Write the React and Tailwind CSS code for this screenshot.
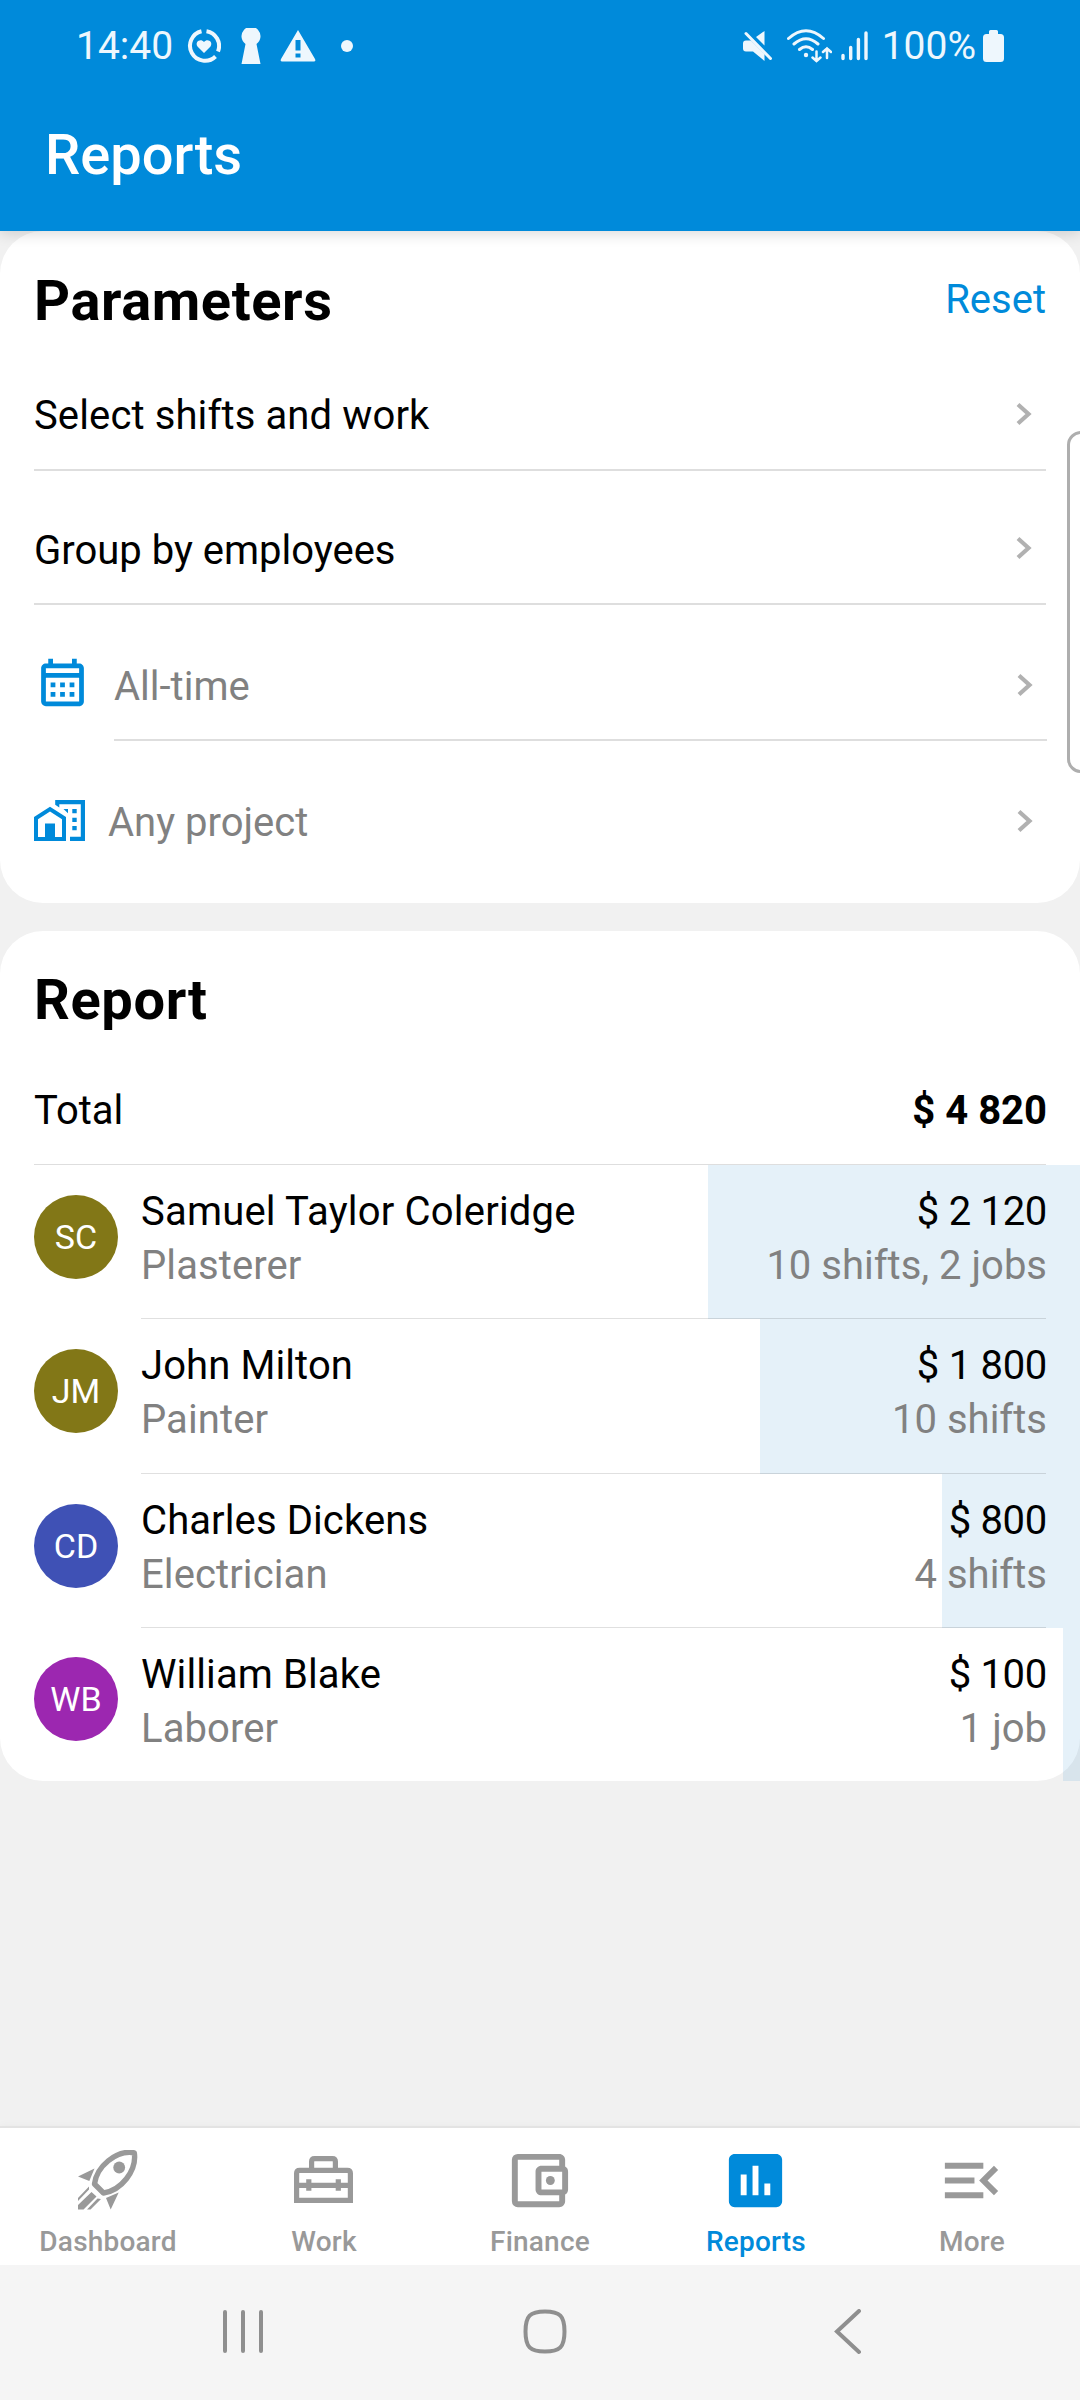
import { MdOutlineCalendarMonth, MdOutlineAccountBalanceWallet, MdInsertChart, MdMenuOpen } from 'react-icons/md';

const employees = [
  { initials: 'SC', name: 'Samuel Taylor Coleridge', role: 'Plasterer', amount: '$ 2 120', work: '10 shifts, 2 jobs', color: 'bg-[#827717]', bar: 372, height: 'h-[154px]' },
  { initials: 'JM', name: 'John Milton', role: 'Painter', amount: '$ 1 800', work: '10 shifts', color: 'bg-[#827717]', bar: 320, height: 'h-[155px]' },
  { initials: 'CD', name: 'Charles Dickens', role: 'Electrician', amount: '$ 800', work: '4 shifts', color: 'bg-[#3f51b5]', bar: 138, height: 'h-[154px]' },
  { initials: 'WB', name: 'William Blake', role: 'Laborer', amount: '$ 100', work: '1 job', color: 'bg-[#9c27b0]', bar: 17, height: 'h-[153px]' },
];

function RocketIcon() {
  return (
    <svg width="60" height="60" viewBox="0 0 60 60" fill="#999999">
      <path d="M56.300 2.800C38-.5 18.500 17 16.500 34L25.500 43C43 40.500 59 21 56.300 2.800Z" fill="none" stroke="#999999" strokeWidth="5.400" strokeLinejoin="round" />
      <circle cx="41.200" cy="17.500" r="5.900" />
      <path d="M0 26.500L16.500 18.500L11.300 31ZM28 48L40.700 42.500L32.700 59.500Z" />
      <path d="M13.500 42L18.500 46.500L5.500 59.500H0V55ZM11 36.500V39.500L0 51V48ZM19.500 48.500L23 49L12.500 59.500H9Z" />
    </svg>
  );
}

function ToolboxIcon() {
  return (
    <svg width="60" height="48" viewBox="0 0 60 48" fill="none" stroke="#999999" strokeWidth="5.200">
      <path d="M17.600 13V5.600Q17.600 2.600 20.600 2.600H38.400Q41.400 2.600 41.400 5.600V13" />
      <path d="M2.600 44.400V17.300Q2.600 14.300 5.600 14.300H53.400Q56.400 14.300 56.400 17.300V44.400ZM3 29.300H56M14.800 23.300V34.800M44.300 23.300V34.800" />
    </svg>
  );
}

function ProjectIcon() {
  return (
    <svg width="51" height="41" viewBox="0 0 51 41" fill="#008ada">
      <path fillRule="evenodd" d="M0 41V17L16 6.700L32 17V41ZM4 37H11V23.500H21V37H28V19.200L16 11.500L4 19.200Z" />
      <path d="M21.200 0H51V41H36V36.800H46.800V4.300H25.300V7.500L21.200 4.800Z" />
      <path d="M38.300 9H42.700V13.300H38.300ZM38.300 17.700H42.700V22H38.300ZM38.300 26H42.700V30.300H38.300ZM29.500 9H34V13.300Z" />
    </svg>
  );
}

const tabs = [
  { label: 'Dashboard', icon: <RocketIcon /> },
  { label: 'Work', icon: <ToolboxIcon /> },
  { label: 'Finance', icon: <MdOutlineAccountBalanceWallet size={71} className="mr-[3px]" /> },
  { label: 'Reports', icon: <MdInsertChart size={71} className="mr-[2px]" />, active: true },
  { label: 'More', icon: <MdMenuOpen size={71} className="mr-[2px]" /> },
];

function StatusBar() {
  return (
    <div className="flex h-[92px] items-center pl-[76px] pr-[76px] text-[#eef7fd]">
      <span className="text-[39px] leading-[40px]">14:40</span>
      <svg className="ml-[14px]" width="34" height="36" viewBox="0 0 34 36" fill="none">
        <path d="M14.500 3.200A15 15 0 1 0 28.500 28.500M19.500 3.200A15 15 0 0 1 31 23.500" stroke="currentColor" strokeWidth="4" />
        <path d="M17 25L10.500 18.500C7.500 14 13.500 10 17 14C20.500 10 26.500 14 23.500 18.500Z" fill="currentColor" />
      </svg>
      <svg className="ml-[20px]" width="20" height="36" viewBox="0 0 20 36" fill="currentColor">
        <path d="M4.500 16A9.500 9.500 0 1 1 15.500 16L19.500 36H.5Z" />
      </svg>
      <svg className="ml-[19px]" width="36" height="32" viewBox="0 0 36 32">
        <path fill="currentColor" fillRule="evenodd" d="M18 0L35 29Q36 31.500 34 31.500H2Q0 31.500 1 29ZM15.500 10V20.500H20.500V10ZM15.500 23.500V27.500H20.500V23.500Z" />
      </svg>
      <span className="ml-[25px] size-[12px] rounded-full bg-[#eef7fd]" />
      <div className="ml-auto flex items-center">
        <svg width="30" height="30" viewBox="0 0 30 30" fill="currentColor">
          <path d="M13 6L21.500 0V14.500ZM3 9.500H8L21.500 23V30L10 20.500H3Q0 20.500 0 17.500V12.500Q0 9.500 3 9.500Z" />
          <path d="M3 2.500L27.500 27.500" stroke="currentColor" strokeWidth="3" strokeLinecap="round" />
        </svg>
        <svg className="ml-[14px]" width="45" height="34" viewBox="0 0 45 34" fill="none" stroke="currentColor" strokeWidth="3" strokeLinecap="round">
          <path d="M1.500 9.500Q19 -6 36.500 9.500M7 15Q19 4.500 31 15M12.500 20.500Q19 15 25.500 20.500" />
          <path d="M29.500 22.500V32M25.500 28.500L29.500 32L33.500 28.500M40 29V19.500M36 23L40 19.500L44 23" strokeWidth="2.500" />
          <circle cx="19" cy="26" r="2.200" fill="currentColor" stroke="none" />
        </svg>
        <svg className="ml-[9px]" width="27" height="30" viewBox="0 0 27 30" stroke="currentColor" strokeWidth="3.400" strokeLinecap="round">
          <path d="M2 24.500V27.500M9.700 16.500V27.500M17.400 8.500V27.500M25 2V27.500" />
        </svg>
        <span className="ml-[14px] text-[39px] leading-[40px]">100%</span>
        <svg className="ml-[7px]" width="21" height="32" viewBox="0 0 21 32" fill="currentColor">
          <path d="M7.500 0H13.500Q15 0 15 1.500V4H17.500Q21 4 21 7.500V28.500Q21 32 17.500 32H3.500Q0 32 0 28.500V7.500Q0 4 3.500 4H6V1.500Q6 0 7.500 0Z" />
        </svg>
      </div>
    </div>
  );
}

function Chevron() {
  return (
    <svg width="16" height="24" viewBox="0 0 16 24" fill="none" stroke="#b1b1b1" strokeWidth="4.200">
      <path d="M2 2.500L12.500 12L2 21.500" />
    </svg>
  );
}

export default function App() {
  return (
    <div className="relative flex h-[2400px] w-[1080px] flex-col overflow-hidden bg-[#f1f1f1] font-['Roboto',sans-serif] text-[40px] text-black">

      {/* App bar */}
      <header className="relative z-10 h-[231px] shrink-0 bg-[#008ada] shadow-[0_2px_14px_rgba(0,0,0,0.16)]">
        <StatusBar />
        <h1 className="ml-[45px] mt-[30px] text-[56px] font-medium leading-[66px] text-white">Reports</h1>
      </header>

      {/* Parameters */}
      <section className="h-[672px] shrink-0 rounded-[43px] bg-white">
        <div className="flex h-[105px] items-end justify-between pl-[34px] pr-[34px]">
          <h2 className="text-[56px] font-bold leading-[70px] tracking-[0.6px]">Parameters</h2>
          <span className="pb-[12px] leading-[48px] text-[#008ada]">Reset</span>
        </div>
        <div className="ml-[34px] mr-[34px] flex h-[135px] items-center justify-between border-b-2 border-[#dedede] pr-[14px] pt-[22px]">
          <span className="pt-[5px] tracking-[0.12px]">Select shifts and work</span>
          <Chevron />
        </div>
        <div className="ml-[34px] mr-[34px] flex h-[134px] items-center justify-between border-b-2 border-[#dedede] pr-[14px] pt-[22px]">
          <span className="pt-[5px]">Group by employees</span>
          <Chevron />
        </div>
        <div className="ml-[34px] mr-[33px] flex h-[136px] items-center text-[#818181]">
          <div className="w-[80px] pt-[18px]">
            <MdOutlineCalendarMonth size={57} className="text-[#008ada]" />
          </div>
          <div className="flex h-full flex-1 items-center justify-between border-b-2 border-[#dedede] pr-[14px] pt-[26px]">
            <span className="pt-[3px]">All-time</span>
            <Chevron />
          </div>
        </div>
        <div className="ml-[34px] mr-[33px] flex h-[134px] items-center pt-[25px] text-[#818181]">
          <ProjectIcon />
          <span className="ml-[23px] flex-1 pt-[4px]">Any project</span>
          <span className="pr-[14px]"><Chevron /></span>
        </div>
      </section>

      {/* Report */}
      <section className="mt-[28px] h-[850px] shrink-0 rounded-[43px] bg-white">
        <h2 className="ml-[34px] pt-[34px] text-[56px] font-bold leading-[70px] tracking-[0.6px]">Report</h2>
        <div className="mx-[34px] flex h-[130px] items-center justify-between border-b border-[#dedede] pt-[22px]">
          <span>Total</span>
          <span className="-mr-[1px] font-bold">$ 4 820</span>
        </div>
        {employees.map((e, i) => (
          <div key={e.initials} className={`relative flex pl-[34px] ${e.height}`}>
            {/* share of the total */}
            <div className="absolute inset-y-0 right-0 bg-[#0074cd]/10" style={{ width: e.bar }} />
            <div className={`flex size-[84px] shrink-0 items-center justify-center rounded-full text-[34px] text-white ${i === 3 ? 'mt-[29px]' : 'mt-[30px]'} ${e.color}`}>
              {e.initials}
            </div>
            <div className={`relative ml-[23px] mr-[34px] flex flex-1 justify-between pt-[20px] leading-[54px] ${i < employees.length - 1 ? 'border-b border-black/12' : ''}`}>
              <div>
                <p className={i === 0 ? 'tracking-[0.2px]' : 'tracking-[0.1px]'}>{e.name}</p>
                <p className="tracking-[0.1px] text-[#818181]">{e.role}</p>
              </div>
              <div className="-mr-[1px] text-right">
                <p className="tracking-[-0.3px]">{e.amount}</p>
                <p className="text-[#818181]">{e.work}</p>
              </div>
            </div>
          </div>
        ))}
      </section>

      {/* Tabs */}
      <nav className="mt-auto flex h-[139px] shrink-0 border-t-2 border-[#e3e3e3] bg-white shadow-[0_-1px_8px_rgba(0,0,0,0.03)]">
        {tabs.map((t) => (
          <div key={t.label} className={`flex flex-1 flex-col items-center ${t.active ? 'text-[#008ada]' : 'text-[#999999]'}`}>
            <div className="flex h-[104px] items-center">{t.icon}</div>
            <span className="-mt-[7px] text-[28px] font-medium leading-[34px] tracking-[0.2px]">{t.label}</span>
          </div>
        ))}
      </nav>

      {/* System navigation */}
      <div className="flex h-[135px] shrink-0 items-center bg-[#f5f5f5] pb-[2px] pl-[222px]">
        <svg width="42" height="46" viewBox="0 0 42 46" stroke="#8f8f8f" strokeWidth="4" strokeLinecap="round">
          <path d="M3 3V42M21 3V42M39 3V42" />
        </svg>
        <svg className="ml-[258px]" width="46" height="46" viewBox="0 0 46 46" fill="none" stroke="#8f8f8f" strokeWidth="4">
          <path d="M23 2.500C38 2.500 42.500 7 42.500 22.500C42.500 38 38 42.500 23 42.500C8 42.500 3.500 38 3.500 22.500C3.500 7 8 2.500 23 2.500Z" />
        </svg>
        <svg className="ml-[266px]" width="28" height="46" viewBox="0 0 28 46" fill="none" stroke="#8f8f8f" strokeWidth="4" strokeLinecap="round">
          <path d="M25 2L3 22.500L25 43" />
        </svg>
      </div>

      {/* Edge panel handle */}
      <div className="absolute -right-[16px] top-[431px] h-[342px] w-[29px] rounded-[14px] border-[3px] border-[#aeaeae] bg-white" />
    </div>
  );
}
